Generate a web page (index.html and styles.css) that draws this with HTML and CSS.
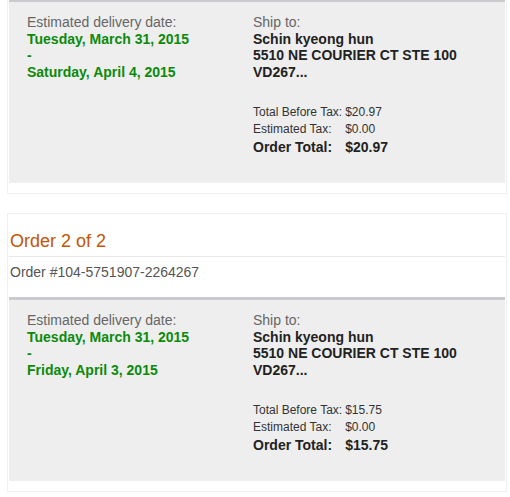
FILE: index.html
```html
<!DOCTYPE html>
<html lang="en">

<head>
    <meta charset="UTF-8">
    <meta name="viewport" content="width=device-width, initial-scale=1.0">
    <title>Your Orders</title>
    <link rel="stylesheet" href="styles.css">
</head>

<body>
    <div class="order-card first">
        <div class="shipment">
            <div class="delivery">
                <div class="label">Estimated delivery date:</div>
                <div class="date">Tuesday, March 31, 2015</div>
                <div class="date">-</div>
                <div class="date">Saturday, April 4, 2015</div>
            </div>
            <div class="ship-info">
                <div class="label">Ship to:</div>
                <div class="address">
                    Schin kyeong hun<br>
                    5510 NE COURIER CT STE 100<br>
                    VD267...
                </div>
                <div class="totals">
                    <span>Total Before Tax:</span><span>$20.97</span>
                    <span>Estimated Tax:</span><span>$0.00</span>
                    <span class="grand">Order Total:</span><span class="grand">$20.97</span>
                </div>
            </div>
        </div>
    </div>

    <div class="order-card">
        <h2 class="order-title">Order 2 of 2</h2>
        <div class="order-number">Order #104-5751907-2264267</div>
        <div class="shipment">
            <div class="delivery">
                <div class="label">Estimated delivery date:</div>
                <div class="date">Tuesday, March 31, 2015</div>
                <div class="date">-</div>
                <div class="date">Friday, April 3, 2015</div>
            </div>
            <div class="ship-info">
                <div class="label">Ship to:</div>
                <div class="address">
                    Schin kyeong hun<br>
                    5510 NE COURIER CT STE 100<br>
                    VD267...
                </div>
                <div class="totals">
                    <span>Total Before Tax:</span><span>$15.75</span>
                    <span>Estimated Tax:</span><span>$0.00</span>
                    <span class="grand">Order Total:</span><span class="grand">$15.75</span>
                </div>
            </div>
        </div>
    </div>
</body>

</html>
```

FILE: styles.css
```css
body {
    font-family: "Liberation Sans", Arial, sans-serif;
    margin: 0;
    background-color: #fff;
    color: #333;
}

.order-card {
    width: 500px;
    margin: 19px 0 0 7px;
    padding: 0 1px 10px 1px;
    border: 1px solid #f0f0f0;
    box-sizing: border-box;
}

.order-card.first {
    margin-top: -1px;
    border-top: none;
}

.order-title {
    margin: 0;
    padding: 17px 0 4px 1px;
    font-size: 18px;
    font-weight: normal;
    line-height: 21px;
    color: #c45500;
    border-bottom: 1px solid #e8e8e8;
}

.order-number {
    padding: 7px 0 16px 1px;
    font-size: 14px;
    line-height: 17px;
    color: #555;
}

.shipment {
    display: grid;
    grid-template-columns: 226px 1fr;
    padding: 12px 18px 27px 18px;
    background-color: #eeeeee;
    border-top: 3px solid #cbcbcf;
    font-size: 14px;
    line-height: 16.5px;
}

.label {
    color: #666;
}

.date {
    color: #0b8a0b;
    font-weight: bold;
}

.address {
    font-weight: bold;
    color: #222;
}

.totals {
    display: grid;
    grid-template-columns: max-content max-content;
    column-gap: 3px;
    margin-top: 24px;
    font-size: 12px;
    line-height: 17px;
    color: #333;
}

.totals .grand {
    font-size: 14px;
    font-weight: bold;
    line-height: 18px;
    color: #222;
}
```
